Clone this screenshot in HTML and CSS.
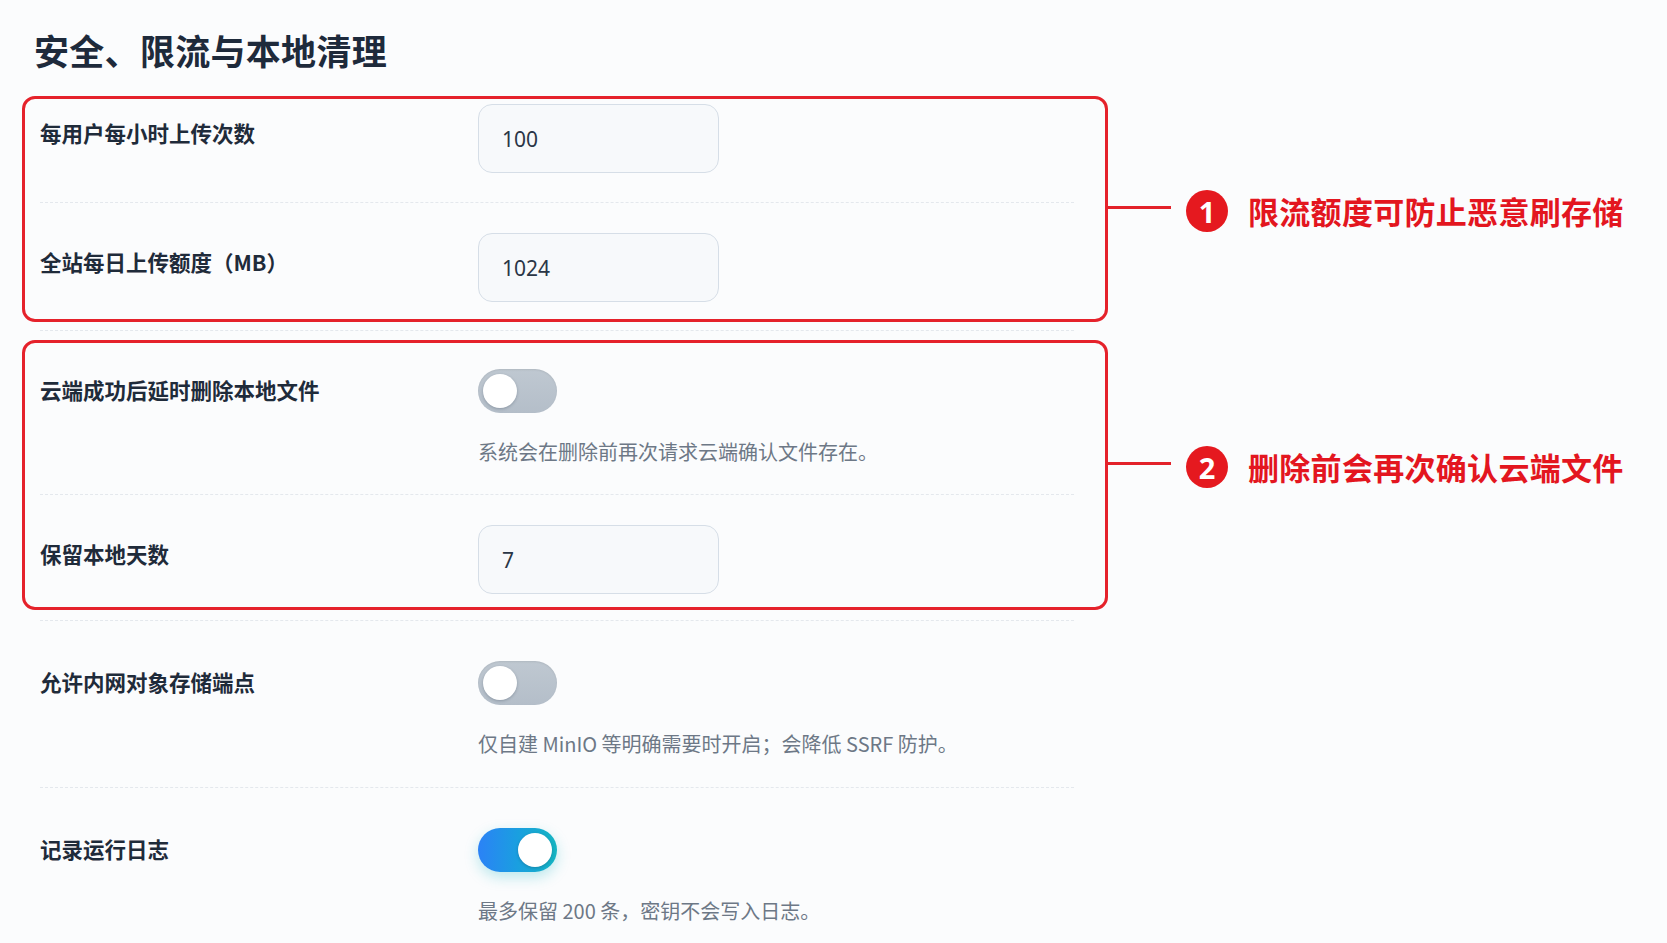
FILE: index.html
```html
<!DOCTYPE html>
<html lang="zh-CN">
<head>
<meta charset="utf-8">
<title>安全、限流与本地清理</title>
<link rel="stylesheet" href="styles.css">
</head>
<body>
<main class="page">
  <h1 class="title">安全、限流与本地清理</h1>

  <div class="annotated">
    <div class="group marked box-rate">
      <div class="row">
        <div class="label">每用户每小时上传次数</div>
        <div class="control"><div class="input">100</div></div>
      </div>
      <div class="row">
        <div class="label">全站每日上传额度（MB）</div>
        <div class="control"><div class="input">1024</div></div>
      </div>
    </div>
    <div class="callout callout-rate">
      <span class="leader"></span>
      <span class="badge">1</span>
      <span class="note">限流额度可防止恶意刷存储</span>
    </div>
  </div>

  <div class="sep sep-a"></div>

  <div class="annotated">
    <div class="group marked box-clean">
      <div class="row">
        <div class="label">云端成功后延时删除本地文件</div>
        <div class="control">
          <div class="toggle"><span class="knob"></span></div>
          <p class="help">系统会在删除前再次请求云端确认文件存在。</p>
        </div>
      </div>
      <div class="row">
        <div class="label">保留本地天数</div>
        <div class="control"><div class="input">7</div></div>
      </div>
    </div>
    <div class="callout callout-clean">
      <span class="leader"></span>
      <span class="badge">2</span>
      <span class="note">删除前会再次确认云端文件</span>
    </div>
  </div>

  <div class="sep sep-b"></div>

  <div class="group plain">
    <div class="row">
      <div class="label">允许内网对象存储端点</div>
      <div class="control">
        <div class="toggle"><span class="knob"></span></div>
        <p class="help">仅自建 MinIO 等明确需要时开启；会降低 SSRF 防护。</p>
      </div>
    </div>
    <div class="row">
      <div class="label">记录运行日志</div>
      <div class="control">
        <div class="toggle on"><span class="knob"></span></div>
        <p class="help">最多保留 200 条，密钥不会写入日志。</p>
      </div>
    </div>
  </div>
</main>
</body>
</html>
```

FILE: styles.css
```css
* { box-sizing: border-box; }

html, body {
  margin: 0;
  padding: 0;
  background: #fbfcfd;
}

body {
  font-family: "Noto Sans CJK SC", "Noto Sans", sans-serif;
  color: #1f2b3a;
  width: 1667px;
  height: 943px;
  overflow: hidden;
}

.page {
  padding: 26px 0 0 22px;
}

.title {
  margin: 0 0 22px 12px;
  font-size: 35px;
  line-height: 48px;
  font-weight: 700;
  color: #1e2a3b;
  letter-spacing: 0.3px;
}

.annotated {
  display: flex;
  align-items: center;
}

.group {
  width: 1086px;
  flex: none;
  border: 3px solid transparent;
  border-radius: 13px;
  padding: 0 31px 0 15px;
}

.group.marked {
  border-color: #e5222b;
}

.box-rate { padding-top: 5px; padding-bottom: 17px; }
.box-clean { padding-top: 18px; padding-bottom: 13px; }
.plain { padding-top: 0; }

.row {
  display: grid;
  grid-template-columns: 438px 1fr;
  align-items: start;
  padding: 30px 0 29px;
  border-bottom: 1px dashed #e4e8ed;
}

.marked > .row:first-child { padding-top: 0; }
.marked > .row:last-child { padding-bottom: 0; border-bottom: none; }
.box-clean > .row:first-child { padding-bottom: 28px; }
.plain > .row:first-child { padding-top: 29px; }
.plain > .row + .row { padding-top: 32px; }

.label {
  padding-top: 15px;
  font-size: 21.5px;
  line-height: 28px;
  font-weight: 600;
  color: #1f2b3a;
  white-space: nowrap;
}

.control {
  display: flex;
  flex-direction: column;
  align-items: flex-start;
}

.input {
  width: 241px;
  height: 69px;
  border: 1px solid #d6dee7;
  border-radius: 14px;
  background: #f7f9fb;
  padding-left: 23px;
  display: flex;
  align-items: center;
  font-family: "Noto Sans", "Open Sans", sans-serif;
  font-size: 21px;
  color: #2a3646;
}

.toggle {
  margin-top: 8px;
  width: 79px;
  height: 44px;
  border-radius: 22px;
  background: linear-gradient(180deg, #bfc8d1 0%, #b4bec9 100%);
  box-shadow: inset 0 1px 2px rgba(0, 0, 0, 0.08);
  display: flex;
  align-items: center;
  padding: 0 5px;
}

.toggle .knob {
  width: 34px;
  height: 34px;
  border-radius: 50%;
  background: #ffffff;
  box-shadow: 0 1px 3px rgba(15, 30, 50, 0.25);
}

.toggle.on {
  justify-content: flex-end;
  background: linear-gradient(90deg, #2b82f6 0%, #1a9fe0 50%, #14b4c1 100%);
  box-shadow: 0 5px 14px rgba(20, 180, 193, 0.28);
}

.help {
  margin: 25px 0 0;
  font-size: 20px;
  line-height: 28px;
  color: #6d7886;
  white-space: nowrap;
}

.sep {
  width: 1086px;
  padding: 0 34px 0 18px;
}

.sep::before {
  content: "";
  display: block;
  border-top: 1px dashed #e4e8ed;
}

.sep-a { margin: 8px 0 9px; }
.sep-b { margin: 10px 0 0; }

.callout {
  display: flex;
  align-items: center;
  color: #e3161f;
}

.callout-rate { margin-top: 4px; }
.callout-clean { margin-bottom: 16px; }

.leader {
  width: 63px;
  height: 3px;
  background: #e3222a;
  margin-right: 15px;
  position: relative;
  top: -4px;
}

.badge {
  width: 42px;
  height: 42px;
  border-radius: 50%;
  background: #e5191f;
  color: #ffffff;
  display: flex;
  align-items: center;
  justify-content: center;
  font-family: "Noto Sans", "Liberation Sans", sans-serif;
  font-size: 29px;
  font-weight: 700;
  line-height: 1;
  margin-right: 20px;
}

.note {
  font-size: 31px;
  line-height: 40px;
  font-weight: 700;
  color: #e3161f;
  white-space: nowrap;
  letter-spacing: 0.3px;
}
```
